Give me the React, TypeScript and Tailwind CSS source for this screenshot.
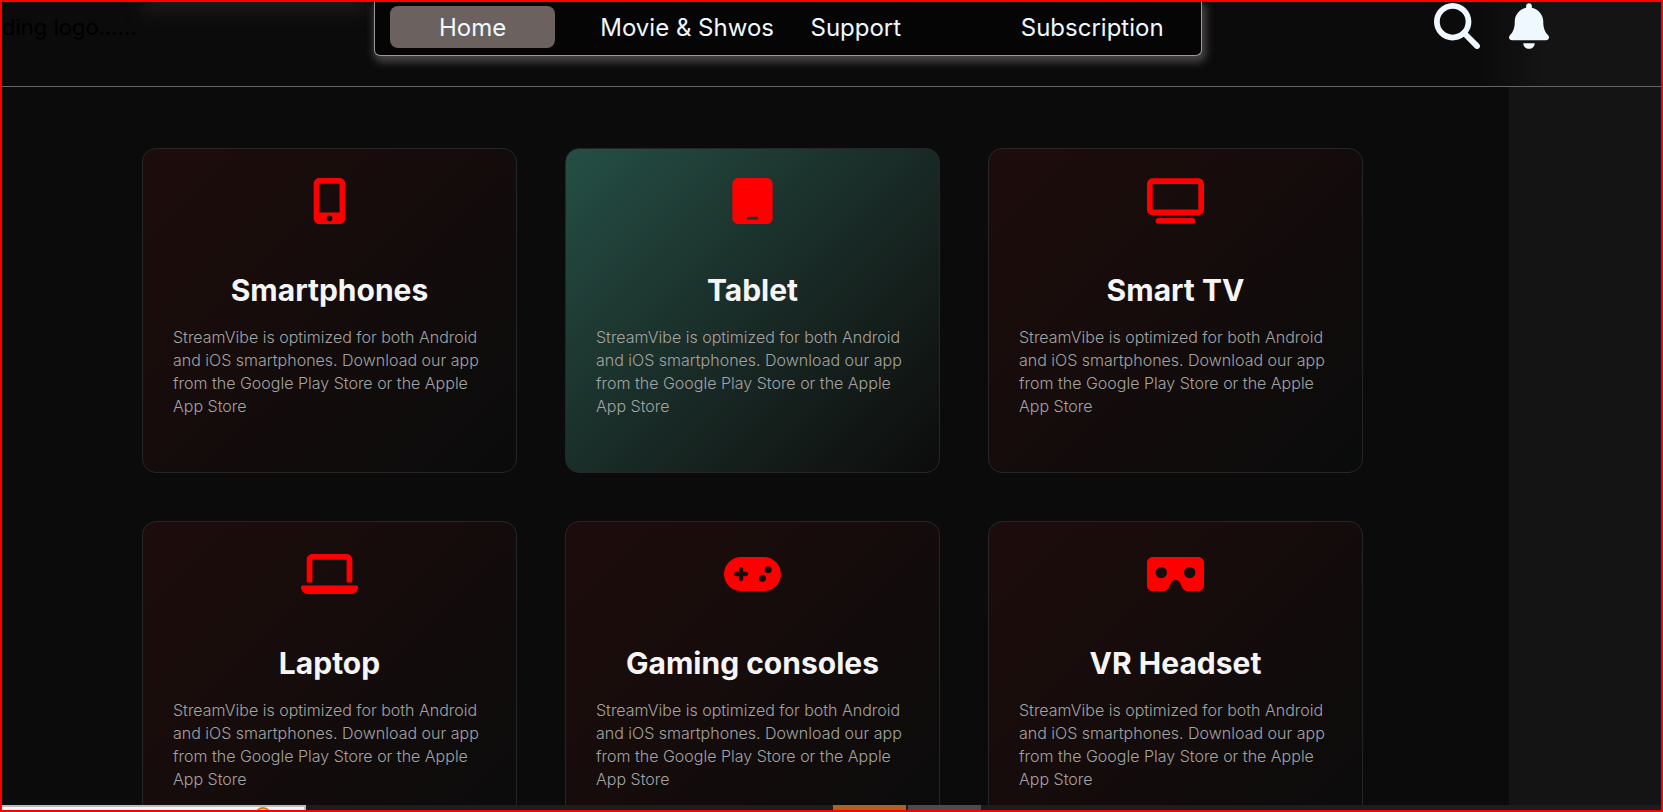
import React from "react";
import type { IconType } from "react-icons";
import {
  FaBell,
  FaGamepad,
  FaLaptop,
  FaMagnifyingGlass,
  FaMobileScreenButton,
  FaTablet,
  FaTv,
  FaVrCardboard,
} from "react-icons/fa6";

type Device = { name: string; icon: IconType; active?: boolean };

const devices: Device[] = [
  { name: "Smartphones", icon: FaMobileScreenButton },
  { name: "Tablet", icon: FaTablet, active: true },
  { name: "Smart TV", icon: FaTv },
  { name: "Laptop", icon: FaLaptop },
  { name: "Gaming consoles", icon: FaGamepad },
  { name: "VR Headset", icon: FaVrCardboard },
];

const description =
  "StreamVibe is optimized for both Android and iOS smartphones. Download our app from the Google Play Store or the Apple App Store";

function DeviceCard({ name, icon: Icon, active }: Device) {
  return (
    <article
      className={`flex flex-col items-center rounded-[14px] border border-[#262626] bg-linear-135 px-[30px] pt-[29px] pb-[54px] ${
        active ? "from-[#244f45] to-[#0c0c0c]" : "from-[#1e0c0c] to-[#0a0b0b]"
      }`}
    >
      <Icon className="h-[46px] w-[57px] text-[#ff0000]" aria-hidden="true" />
      <h2 className="mt-[46px] text-[30px] leading-[40px] font-bold text-[#f5f5f5]">{name}</h2>
      <p className="mt-4 w-full text-[16px] leading-[23px] font-light text-[#a3a3a3]">{description}</p>
    </article>
  );
}

function Header() {
  return (
    <header className="relative flex h-[85px] shrink-0 items-start border-b border-[#666666] bg-linear-to-r from-[#0b0b0b] from-89% to-[#141414] to-93%">
      <div className="absolute -top-2 left-[140px] h-5 w-56 bg-[#1b1917] blur-[8px]" />
      <span className="relative w-[372px] shrink-0 pt-[9px] text-[22px] leading-[32px] whitespace-nowrap text-black">
        ding logo......
      </span>
      <nav className="relative grid h-[54px] w-[828px] grid-cols-4 gap-[45px] rounded-b-[6px] border border-t-0 border-[#999999] bg-[#050505] px-[15px] pt-[4px] text-[24px] leading-[44px] whitespace-nowrap text-[#f0f8ff] shadow-[2px_4px_8px_2px_#4a4646]">
        <a href="#home" className="h-[42px] rounded-[8px] bg-[#6b6260] text-center">
          Home
        </a>
        <a href="#movies">Movie &amp; Shwos</a>
        <a href="#support">Support</a>
        <a href="#subscription">Subscription</a>
      </nav>
      <div className="relative mr-[112px] ml-auto flex gap-[29px] pt-px text-[#f0f8ff]">
        <button type="button" aria-label="Search">
          <FaMagnifyingGlass className="size-[46px]" />
        </button>
        <button type="button" aria-label="Notifications">
          <FaBell className="h-[46px] w-[40px]" />
        </button>
      </div>
    </header>
  );
}

function BottomStrip() {
  return (
    <div className="absolute inset-x-0 bottom-0 flex h-[5px] bg-[#1d1d1d]">
      <div className="flex h-full w-[304px] justify-end overflow-hidden border-t-2 border-r-2 border-[#bdbdbd] bg-[#f5f5f5] pr-8">
        <div className="size-[18px] shrink-0 rounded-full border-2 border-[#d9781e]" />
      </div>
      <div className="ml-[527px] h-full w-[73px] bg-[#b3601f]" />
      <div className="ml-[2px] h-full w-[73px] bg-[#4d4a4a]" />
    </div>
  );
}

export default function App() {
  return (
    <div className="relative flex h-screen flex-col overflow-hidden border-2 border-[#ff0000] bg-[#141414] font-['Inter','Liberation_Sans',sans-serif]">
      <Header />
      <main className="mr-[152px] min-h-0 flex-1 bg-[#0b0b0b] pt-[61px] pr-[146px] pl-[140px]">
        <div className="grid grid-cols-3 gap-12">
          {devices.map((device) => (
            <DeviceCard key={device.name} {...device} />
          ))}
        </div>
      </main>
      <BottomStrip />
    </div>
  );
}
